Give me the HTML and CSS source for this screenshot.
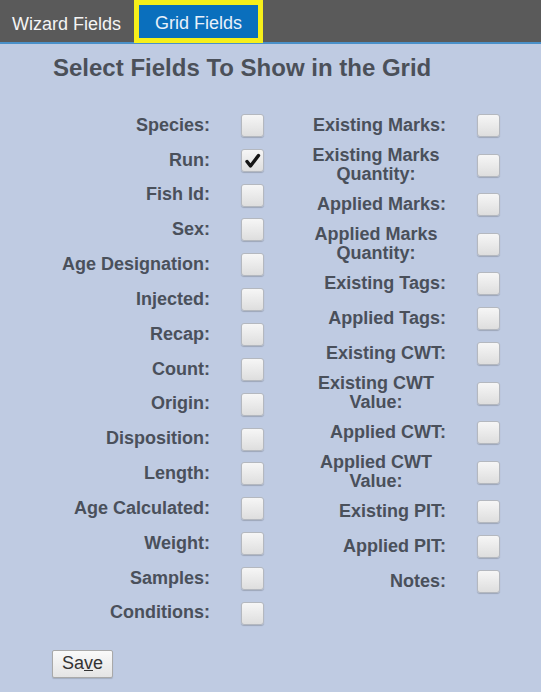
FILE: index.html
```html
<!DOCTYPE html>
<html>
<head>
<meta charset="utf-8">
<link rel="stylesheet" href="styles.css">
</head>
<body>
<div class="tabbar">
  <div class="tab">Wizard Fields</div>
  <div class="tab active">Grid Fields</div>
</div>
<div class="content">
  <h1 class="title">Select Fields To Show in the Grid</h1>
  <div class="fields">
    <div class="col col-left">
      <div class="row"><div class="label">Species:</div><span class="cb"></span></div>
      <div class="row"><div class="label">Run:</div><span class="cb checked"><svg width="17" height="17" viewBox="0 0 17 17"><path d="M3 9.5 L6.5 14 L14.5 3.5" fill="none" stroke="#151515" stroke-width="3.4" stroke-linecap="round" stroke-linejoin="round"/></svg></span></div>
      <div class="row"><div class="label">Fish Id:</div><span class="cb"></span></div>
      <div class="row"><div class="label">Sex:</div><span class="cb"></span></div>
      <div class="row"><div class="label">Age Designation:</div><span class="cb"></span></div>
      <div class="row"><div class="label">Injected:</div><span class="cb"></span></div>
      <div class="row"><div class="label">Recap:</div><span class="cb"></span></div>
      <div class="row"><div class="label">Count:</div><span class="cb"></span></div>
      <div class="row"><div class="label">Origin:</div><span class="cb"></span></div>
      <div class="row"><div class="label">Disposition:</div><span class="cb"></span></div>
      <div class="row"><div class="label">Length:</div><span class="cb"></span></div>
      <div class="row"><div class="label">Age Calculated:</div><span class="cb"></span></div>
      <div class="row"><div class="label">Weight:</div><span class="cb"></span></div>
      <div class="row"><div class="label">Samples:</div><span class="cb"></span></div>
      <div class="row"><div class="label">Conditions:</div><span class="cb"></span></div>
    </div>
    <div class="col col-right">
      <div class="row"><div class="label">Existing Marks:</div><span class="cb"></span></div>
      <div class="row"><div class="label two">Existing Marks<br>Quantity:</div><span class="cb"></span></div>
      <div class="row"><div class="label">Applied Marks:</div><span class="cb"></span></div>
      <div class="row"><div class="label two">Applied Marks<br>Quantity:</div><span class="cb"></span></div>
      <div class="row"><div class="label">Existing Tags:</div><span class="cb"></span></div>
      <div class="row"><div class="label">Applied Tags:</div><span class="cb"></span></div>
      <div class="row"><div class="label">Existing CWT:</div><span class="cb"></span></div>
      <div class="row"><div class="label two">Existing CWT<br>Value:</div><span class="cb"></span></div>
      <div class="row"><div class="label">Applied CWT:</div><span class="cb"></span></div>
      <div class="row"><div class="label two">Applied CWT<br>Value:</div><span class="cb"></span></div>
      <div class="row"><div class="label">Existing PIT:</div><span class="cb"></span></div>
      <div class="row"><div class="label">Applied PIT:</div><span class="cb"></span></div>
      <div class="row"><div class="label">Notes:</div><span class="cb"></span></div>
    </div>
  </div>
  <button class="save">Sa<u>v</u>e</button>
</div>
</body>
</html>
```
FILE: styles.css
```css
html, body {
  margin: 0;
  padding: 0;
}
body {
  width: 541px;
  height: 692px;
  background: #bfcbe2;
  font-family: "Liberation Sans", Arial, sans-serif;
  overflow: hidden;
}
.tabbar {
  display: flex;
  height: 42px;
  background: #5a5a5a;
  border-bottom: 2px solid #4a90c8;
  box-sizing: content-box;
}
.tab {
  color: #f4f4f4;
  font-size: 18px;
  line-height: 42px;
  padding: 3px 13px 0 12px;
  box-sizing: border-box;
}
.active {
  height: 43px;
  width: 129px;
  padding: 3px 0 0 0;
  text-align: center;
  line-height: 31px;
  background: #0a6fbd;
  border: 5px solid #f6ef1a;
  color: #e8f0fa;
}
.content {
  padding: 9px 0 0 0;
}
.title {
  margin: 0 0 0 53px;
  font-size: 24px;
  line-height: 30px;
  font-weight: bold;
  color: #4b5059;
}
.fields {
  display: flex;
  align-items: flex-start;
  margin-top: 25px;
  padding-left: 50px;
}
.row {
  display: flex;
  align-items: center;
  padding: 2.5px 0;
  min-height: 30px;
}
.col-left .row {
  padding: 2.43px 0;
}
.label {
  font-size: 18px;
  font-weight: bold;
  color: #4a505b;
  text-align: right;
  line-height: 19.5px;
}
.col-left .label {
  width: 160px;
}
.col-right {
  margin-left: 42px;
}
.col-right .label {
  width: 140px;
}
.label.two {
  text-align: center;
}
.cb {
  box-sizing: border-box;
  width: 23px;
  height: 23px;
  margin-left: 31px;
  border: 1px solid #b4b8bf;
  border-radius: 3px;
  background: linear-gradient(#f6f6f6, #dedede);
  box-shadow: 0 1px 1px rgba(0, 0, 0, 0.18);
  display: flex;
  align-items: center;
  justify-content: center;
}
.save {
  margin: 19px 0 0 52px;
  width: 61px;
  height: 28px;
  padding: 0;
  font-family: "Liberation Sans", Arial, sans-serif;
  font-size: 18px;
  color: #333;
  border: 1px solid #a9a9a9;
  border-radius: 2px;
  background: linear-gradient(#fafafa, #e4e4e4);
  box-shadow: 0 1px 1px rgba(0, 0, 0, 0.15);
}
```
